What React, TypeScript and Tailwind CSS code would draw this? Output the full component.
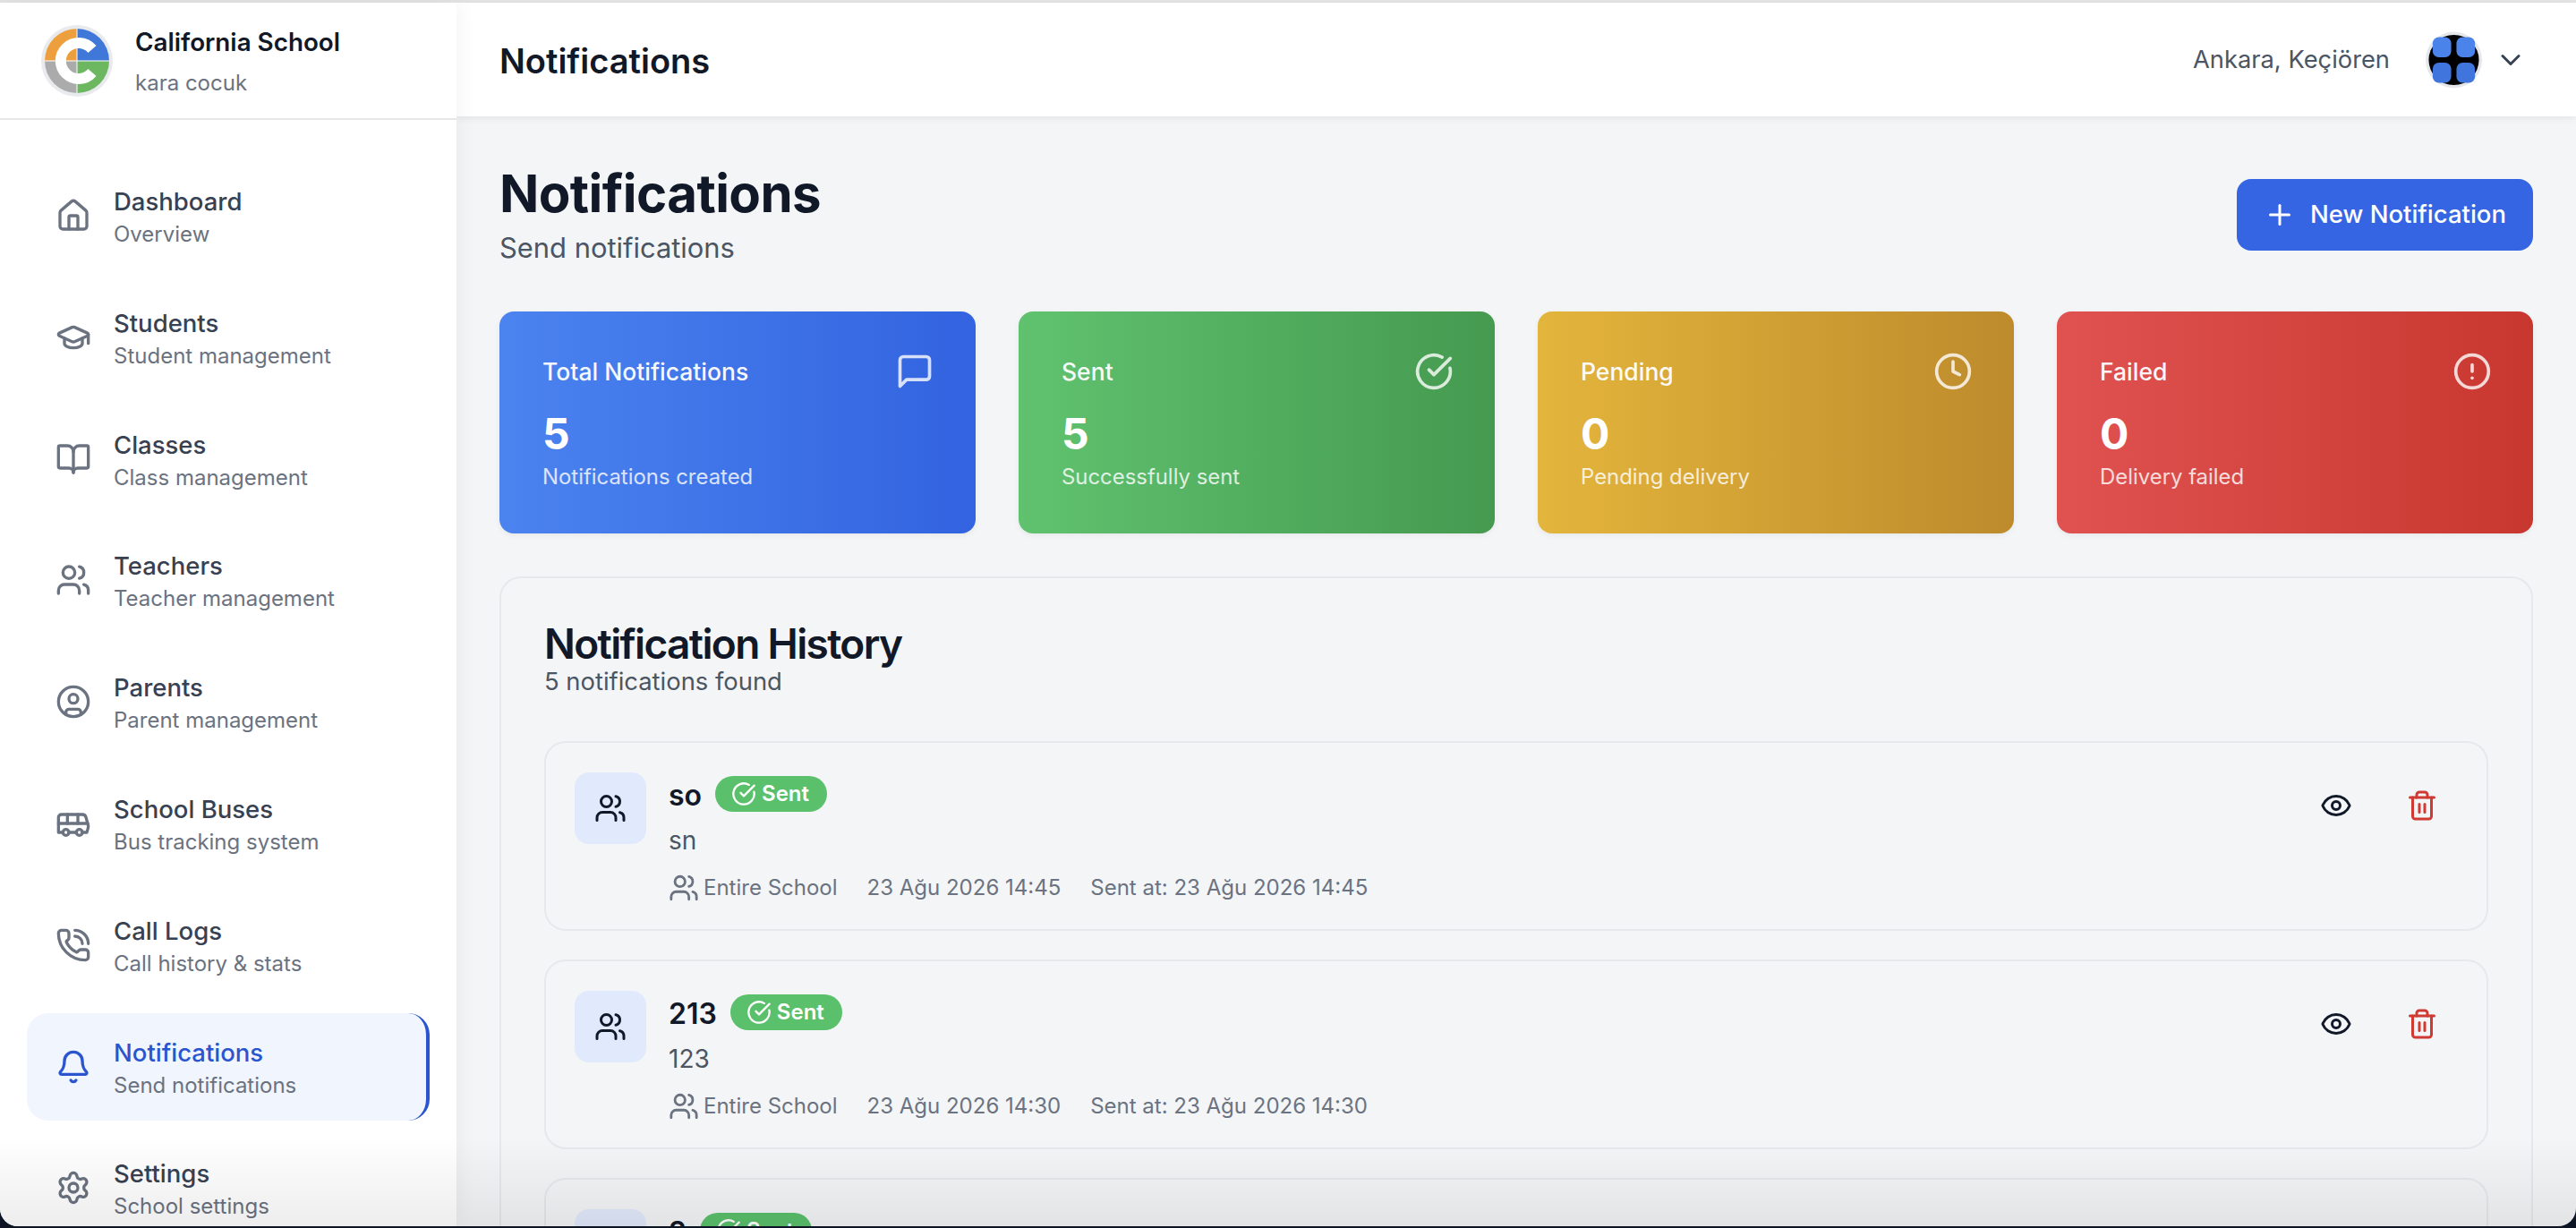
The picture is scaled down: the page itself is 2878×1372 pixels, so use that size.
import {
  Bell,
  BookOpen,
  Bus,
  ChevronDown,
  CircleAlert,
  CircleCheckBig,
  CircleUser,
  Clock,
  Eye,
  GraduationCap,
  House,
  PhoneCall,
  Plus,
  Settings,
  Trash2,
  Users,
  type LucideIcon,
} from "lucide-react";

const NAV: { title: string; sub: string; icon: LucideIcon; active?: boolean }[] = [
  { title: "Dashboard", sub: "Overview", icon: House },
  { title: "Students", sub: "Student management", icon: GraduationCap },
  { title: "Classes", sub: "Class management", icon: BookOpen },
  { title: "Teachers", sub: "Teacher management", icon: Users },
  { title: "Parents", sub: "Parent management", icon: CircleUser },
  { title: "School Buses", sub: "Bus tracking system", icon: Bus },
  { title: "Call Logs", sub: "Call history & stats", icon: PhoneCall },
  { title: "Notifications", sub: "Send notifications", icon: Bell, active: true },
  { title: "Settings", sub: "School settings", icon: Settings },
];

const ROWS = [
  { title: "so", body: "sn", time: "23 Ağu 2026 14:45" },
  { title: "213", body: "123", time: "23 Ağu 2026 14:30" },
  { title: "2", body: "2", time: "23 Ağu 2026 14:15" },
];

function ChatIcon({ className }: { className?: string }) {
  return (
    <svg viewBox="0 0 24 24" fill="none" stroke="currentColor" strokeWidth="2" strokeLinecap="round" strokeLinejoin="round" className={className}>
      <path d="M21 15a2 2 0 0 1-2 2H7l-4 4V5a2 2 0 0 1 2-2h14a2 2 0 0 1 2 2z" />
    </svg>
  );
}

function Logo() {
  return (
    <svg viewBox="0 0 80 80" className="h-[80px] w-[80px] shrink-0">
      <circle cx="40" cy="40" r="40" fill="#e8eaed" />
      <path d="M40 40V4a36 36 0 0 0-36 36z" fill="#ee9f3d" />
      <path d="M40 40V4a36 36 0 0 1 36 36z" fill="#3f78d8" />
      <path d="M40 40H4a36 36 0 0 0 36 36z" fill="#ababab" />
      <path d="M40 40H76a36 36 0 0 1-36 36z" fill="#6cb75f" />
      <path d="M40 4V76M4 40H76" stroke="#fff" strokeWidth="1" />
      <path d="M57 27a20 20 0 1 0 0 26" fill="none" stroke="#fff" strokeWidth="12" />
    </svg>
  );
}

function Avatar() {
  return (
    <svg viewBox="0 0 64 64" className="h-[64px] w-[63px]">
      <circle cx="32" cy="32" r="32" fill="#e5e7eb" />
      <circle cx="32" cy="32" r="28.5" fill="#000" />
      <rect x="8" y="6" width="21" height="23" rx="7" fill="#4a84ea" />
      <rect x="35" y="6" width="21" height="23" rx="7" fill="#4a84ea" />
      <rect x="8" y="35" width="21" height="23" rx="7" fill="#3f75dd" />
      <rect x="35" y="35" width="21" height="23" rx="7" fill="#3f75dd" />
    </svg>
  );
}

function Sidebar() {
  return (
    <aside className="relative z-20 flex w-[510px] shrink-0 flex-col bg-white shadow-[0_0_24px_rgba(0,0,0,0.06)]">
      <div className="flex h-[131px] shrink-0 items-center gap-[25px] border-b-2 border-[#e7e8ea] pl-[46px]">
        <Logo />
        <div>
          <div className="text-[27.8px] leading-[40px] font-semibold text-[#111827]">California School</div>
          <div className="mt-[10px] text-[24px] leading-[32px] text-[#6b7280]">kara cocuk</div>
        </div>
      </div>
      <nav className="flex flex-col gap-[15.8px] px-[30px] pt-[47px]">
        {NAV.map((item) => {
          const Icon = item.icon;
          return (
            <div
              key={item.title}
              className={
                item.active
                  ? "flex h-[120px] shrink-0 items-center gap-[25px] rounded-[24px] border-r-4 border-[#2a55cf] bg-[#f0f5fe] pl-[32px]"
                  : "flex h-[120px] shrink-0 items-center gap-[25px] rounded-[24px] pl-[32px]"
              }
            >
              <Icon className={item.active ? "h-[40px] w-[40px] text-[#2a55cf]" : "h-[40px] w-[40px] text-[#6b7280]"} strokeWidth={2} />
              <div className="mt-[3px]">
                <div className={item.active ? "text-[27.5px] leading-[38px] font-[450] text-[#2a55cf]" : "text-[27.5px] leading-[38px] font-[450] text-[#374151]"}>
                  {item.title}
                </div>
                <div className="pt-[1px] text-[24px] leading-[34px] text-[#6b7280]">{item.sub}</div>
              </div>
            </div>
          );
        })}
      </nav>
    </aside>
  );
}

function Topbar() {
  return (
    <header className="relative z-10 flex h-[127px] shrink-0 items-center bg-white pr-[55px] pl-[48px] shadow-[0_2px_8px_rgba(0,0,0,0.07)]">
      <h2 className="pt-[3px] text-[38px] leading-[48px] font-semibold text-[#111827]">Notifications</h2>
      <div className="ml-auto pt-[2px] text-[27.3px] text-[#4b5563]">Ankara, Keçiören</div>
      <div className="ml-[40px]">
        <Avatar />
      </div>
      <ChevronDown className="ml-[14px] h-[36px] w-[36px] text-[#374151]" strokeWidth={2} />
    </header>
  );
}

function StatCard(props: { title: string; value: string; sub: string; icon: React.ReactNode; gradient: string }) {
  return (
    <div className={`h-[248px] rounded-[16px] pt-[45px] pr-[46px] pl-[48px] text-white shadow-[0_2px_6px_rgba(0,0,0,0.06)] ${props.gradient}`}>
      <div className="flex items-center justify-between">
        <div className="text-[26.5px] leading-[44px] font-[450] opacity-95">{props.title}</div>
        {props.icon}
      </div>
      <div className="mt-[20px] text-[48px] leading-[56px] font-bold">{props.value}</div>
      <div className="mt-[3px] text-[23.9px] leading-[34px] opacity-80">{props.sub}</div>
    </div>
  );
}

function Row({ title, body, time }: { title: string; body: string; time: string }) {
  return (
    <div className="flex h-[212px] shrink-0 items-start rounded-[24px] border-2 border-[#e6e8eb] pt-[33px] pl-[32px]">
      <div className="flex h-[80px] w-[80px] shrink-0 items-center justify-center rounded-[16px] bg-[#e1eafc]">
        <Users className="h-[36px] w-[36px] text-[#111827]" strokeWidth={2} />
      </div>
      <div className="ml-[25px] min-w-0">
        <div className="flex h-[48px] items-center gap-[15px]">
          <span className="pt-[3px] text-[32px] leading-[40px] font-semibold text-[#111827]">{title}</span>
          <span className="flex h-[40px] items-center gap-[6px] rounded-full bg-[#5ac06b] pr-[20px] pl-[18px] text-[24px] font-semibold text-white">
            <CircleCheckBig className="h-[28px] w-[28px]" strokeWidth={2} />
            Sent
          </span>
        </div>
        <div className="mt-[8px] text-[28px] leading-[40px] text-[#4b5563]">{body}</div>
        <div className="mt-[15px] flex items-center text-[24px] leading-[36px] text-[#6b7280]">
          <Users className="h-[34px] w-[34px]" strokeWidth={2} />
          <span className="ml-[5px]">Entire School</span>
          <span className="ml-[33px]">{time}</span>
          <span className="ml-[33px]">Sent at: {time}</span>
        </div>
      </div>
      <div className="ml-auto flex gap-[12px]">
        <div className="flex h-[73px] w-[84px] items-center justify-center">
          <Eye className="h-[36px] w-[36px] text-[#111827]" strokeWidth={2} />
        </div>
        <div className="flex h-[73px] w-[84px] items-center justify-center">
          <Trash2 className="h-[36px] w-[36px] text-[#cf3a33]" strokeWidth={2} />
        </div>
      </div>
      <div className="w-[30px] shrink-0" />
    </div>
  );
}

export default function App() {
  return (
    <div className="h-[1372px] w-full overflow-hidden bg-[#0d1524] font-['Inter',sans-serif]">
      <div className="relative flex h-[1370px] flex-col overflow-hidden rounded-b-[20px] bg-[#f3f5f7]">
        <div className="h-[3px] shrink-0 bg-[#e4e4e4]" />
        <div className="flex min-h-0 flex-1">
          <Sidebar />
          <main className="flex min-w-0 flex-1 flex-col">
            <Topbar />
            <div className="flex min-h-0 flex-1 flex-col p-[48px]">
              <div className="flex shrink-0 items-center justify-between">
                <div>
                  <h1 className="text-[58.2px] leading-[76px] font-bold tracking-[-0.01em] text-[#111827]">Notifications</h1>
                  <p className="pt-[2px] text-[30.9px] leading-[42px] text-[#4b5563]">Send notifications</p>
                </div>
                <button className="mt-[4px] flex h-[80px] w-[331px] items-center justify-center gap-[16px] rounded-[16px] bg-[#3565e3] text-[27.5px] font-[450] text-white">
                  <Plus className="h-[36px] w-[36px]" strokeWidth={2} />
                  New Notification
                </button>
              </div>
              <div className="mt-[50px] grid shrink-0 grid-cols-4 gap-[48px]">
                <StatCard title="Total Notifications" value="5" sub="Notifications created" gradient="bg-gradient-to-r from-[#4b83ef] to-[#3363e0]" icon={<ChatIcon className="h-[44px] w-[44px] opacity-80" />} />
                <StatCard title="Sent" value="5" sub="Successfully sent" gradient="bg-gradient-to-r from-[#60c26f] to-[#459a50]" icon={<CircleCheckBig className="h-[44px] w-[44px] opacity-80" strokeWidth={2} />} />
                <StatCard title="Pending" value="0" sub="Pending delivery" gradient="bg-gradient-to-r from-[#e4b53c] to-[#bd8b2c]" icon={<Clock className="h-[44px] w-[44px] opacity-80" strokeWidth={2} />} />
                <StatCard title="Failed" value="0" sub="Delivery failed" gradient="bg-gradient-to-r from-[#e05250] to-[#c8372f]" icon={<CircleAlert className="h-[44px] w-[44px] opacity-80" strokeWidth={2} />} />
              </div>
              <section className="mt-[48px] flex flex-col rounded-[24px] border-2 border-[#e6e8eb] px-[48px] pt-[46px]">
                <h3 className="text-[46px] leading-[54px] font-semibold tracking-[-0.036em] text-[#111827]">Notification History</h3>
                <p className="text-[27.4px] leading-[30px] text-[#4b5563]">5 notifications found</p>
                <div className="mt-[52px] flex flex-col gap-[32px]">
                  {ROWS.map((r, i) => (
                    <Row key={i} {...r} />
                  ))}
                </div>
              </section>
            </div>
          </main>
        </div>
        <div className="pointer-events-none absolute inset-x-0 bottom-0 z-30 h-[100px] bg-gradient-to-b from-transparent to-[#00000012]" />
      </div>
    </div>
  );
}
